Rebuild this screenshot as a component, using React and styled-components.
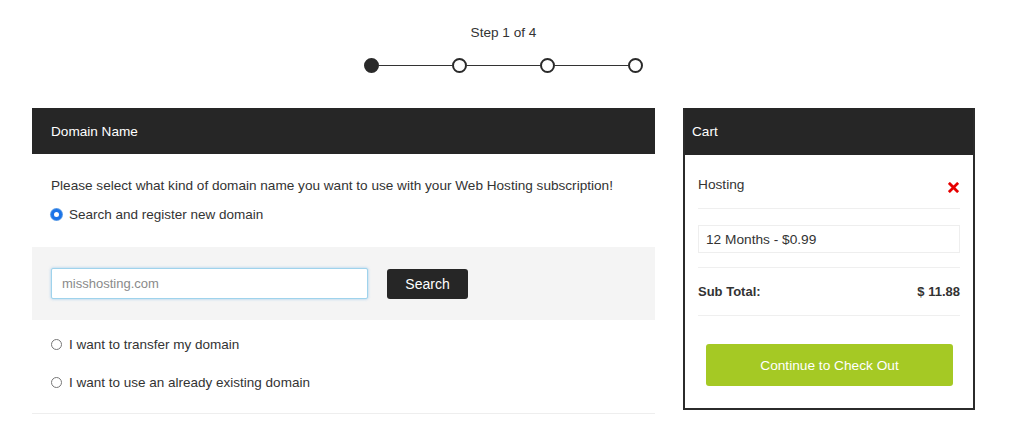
import React from 'react';
import styled, { createGlobalStyle } from 'styled-components';

const GlobalStyle = createGlobalStyle`
  body {
    margin: 0;
    background: #ffffff;
    font-family: "Liberation Sans", Arial, Helvetica, sans-serif;
    color: #333333;
  }
`;

const steps = [1, 2, 3, 4];

const App = () => {
  return (
    <Page>
      <GlobalStyle />
      <Stepper>
        <StepLabel>Step 1 of 4</StepLabel>
        <StepTrack>
          {steps.map((s, i) => (
            <React.Fragment key={s}>
              {i > 0 && <StepLine />}
              <StepDot active={s === 1} />
            </React.Fragment>
          ))}
        </StepTrack>
      </Stepper>

      <Columns>
        <DomainPanel>
          <PanelHeader>Domain Name</PanelHeader>
          <PanelBody>
            <Intro>Please select what kind of domain name you want to use with your Web Hosting subscription!</Intro>
            <RadioRow>
              <RadioMark checked />
              Search and register new domain
            </RadioRow>
          </PanelBody>
          <SearchBand>
            <DomainInput placeholder="misshosting.com" />
            <SearchButton>Search</SearchButton>
          </SearchBand>
          <OptionList>
            <RadioRow>
              <RadioMark />
              I want to transfer my domain
            </RadioRow>
            <RadioRow>
              <RadioMark />
              I want to use an already existing domain
            </RadioRow>
          </OptionList>
        </DomainPanel>

        <Cart>
          <CartHeader>Cart</CartHeader>
          <CartBody>
            <CartItem>
              <span>Hosting</span>
              <RemoveIcon viewBox="0 0 12 12">
                <path d="M2 2 L10 10 M10 2 L2 10" stroke="#e60000" strokeWidth="3" strokeLinecap="square" />
              </RemoveIcon>
            </CartItem>
            <PeriodRow>
              <PeriodBox>12 Months - $0.99</PeriodBox>
            </PeriodRow>
            <TotalRow>
              <span>Sub Total:</span>
              <span>$ 11.88</span>
            </TotalRow>
            <CheckoutWrap>
              <CheckoutButton>Continue to Check Out</CheckoutButton>
            </CheckoutWrap>
          </CartBody>
        </Cart>
      </Columns>
    </Page>
  );
};

export default App;

const Page = styled.div`
  width: 943px;
  margin-left: 32px;
  padding-top: 25px;
`;

const Stepper = styled.div`
  display: flex;
  flex-direction: column;
  align-items: center;
`;

const StepLabel = styled.div`
  font-size: 13.6px;
  color: #333333;
  line-height: 16px;
`;

const StepTrack = styled.div`
  display: flex;
  align-items: center;
  margin-top: 17px;
`;

const StepLine = styled.div`
  width: 73px;
  height: 1.5px;
  background: #333333;
`;

const StepDot = styled.div`
  width: 15px;
  height: 15px;
  box-sizing: border-box;
  border-radius: 50%;
  border: 2px solid #2a2a2a;
  background: ${props => (props.active ? '#2a2a2a' : '#ffffff')};
`;

const Columns = styled.div`
  display: flex;
  align-items: flex-start;
  gap: 28px;
  margin-top: 35px;
`;

const DomainPanel = styled.div`
  width: 623px;
  border-bottom: 1px solid #eeeeee;
  padding-bottom: 22px;
`;

const PanelHeader = styled.div`
  height: 46px;
  display: flex;
  align-items: center;
  padding-left: 19px;
  background: #262626;
  color: #ffffff;
  font-size: 13.6px;
`;

const PanelBody = styled.div`
  padding: 23px 19px 24px;
`;

const Intro = styled.p`
  margin: 0 0 12px;
  font-size: 13.6px;
  line-height: 17px;
  color: #333333;
`;

const RadioRow = styled.label`
  display: flex;
  align-items: center;
  gap: 7px;
  font-size: 13.5px;
  line-height: 17px;
  color: #333333;
`;

const RadioMark = styled.span`
  width: 11px;
  height: 11px;
  box-sizing: border-box;
  border-radius: 50%;
  border: ${props => (props.checked ? '3px solid #1a73e8' : '1px solid #777777')};
  background: #ffffff;
  box-shadow: ${props => (props.checked ? '0 0 0 1px #5a9be6' : 'none')};
  flex-shrink: 0;
`;

const SearchBand = styled.div`
  background: #f4f4f4;
  padding: 21px 19px;
  display: flex;
  align-items: center;
  gap: 19px;
`;

const DomainInput = styled.input`
  width: 317px;
  height: 31px;
  box-sizing: border-box;
  border: 1px solid #9fd3ec;
  box-shadow: 0 0 3px rgba(102, 175, 233, 0.6);
  border-radius: 2px;
  padding: 0 10px;
  font-family: inherit;
  font-size: 13px;
  color: #333333;
  background: #ffffff;
  outline: none;
  &::placeholder {
    color: #8a8a8a;
  }
`;

const SearchButton = styled.button`
  width: 81px;
  height: 30px;
  border: none;
  border-radius: 3px;
  background: #262626;
  color: #ffffff;
  font-family: inherit;
  font-size: 14px;
  cursor: pointer;
`;

const OptionList = styled.div`
  display: flex;
  flex-direction: column;
  gap: 21px;
  padding: 16px 19px 0;
`;

const Cart = styled.div`
  width: 292px;
  box-sizing: border-box;
  border: 2px solid #2b2b2b;
  border-top: none;
`;

const CartHeader = styled.div`
  height: 47px;
  display: flex;
  align-items: center;
  padding-left: 7px;
  background: #262626;
  color: #ffffff;
  font-size: 13.6px;
`;

const CartBody = styled.div`
  padding: 0 13px 22px;
  font-size: 13.7px;
  color: #333333;
`;

const CartItem = styled.div`
  display: flex;
  justify-content: space-between;
  align-items: flex-start;
  padding: 22px 0 15px;
  border-bottom: 1px solid #efefef;
  line-height: 16px;
`;

const RemoveIcon = styled.svg`
  width: 11px;
  height: 11px;
  margin-top: 5px;
  margin-right: 1px;
`;

const PeriodRow = styled.div`
  padding: 16px 0 14px;
  border-bottom: 1px solid #efefef;
`;

const PeriodBox = styled.div`
  height: 28px;
  box-sizing: border-box;
  border: 1px solid #eeeeee;
  display: flex;
  align-items: center;
  padding-left: 7px;
  font-size: 13.7px;
`;

const TotalRow = styled.div`
  display: flex;
  justify-content: space-between;
  align-items: center;
  padding: 16px 0 15px;
  border-bottom: 1px solid #efefef;
  font-size: 13px;
  font-weight: bold;
  line-height: 16px;
`;

const CheckoutWrap = styled.div`
  padding: 28px 7px 0 8px;
`;

const CheckoutButton = styled.button`
  width: 100%;
  height: 42px;
  border: none;
  border-radius: 3px;
  background: #a5c924;
  color: #ffffff;
  font-family: inherit;
  font-size: 13.7px;
  cursor: pointer;
`;
